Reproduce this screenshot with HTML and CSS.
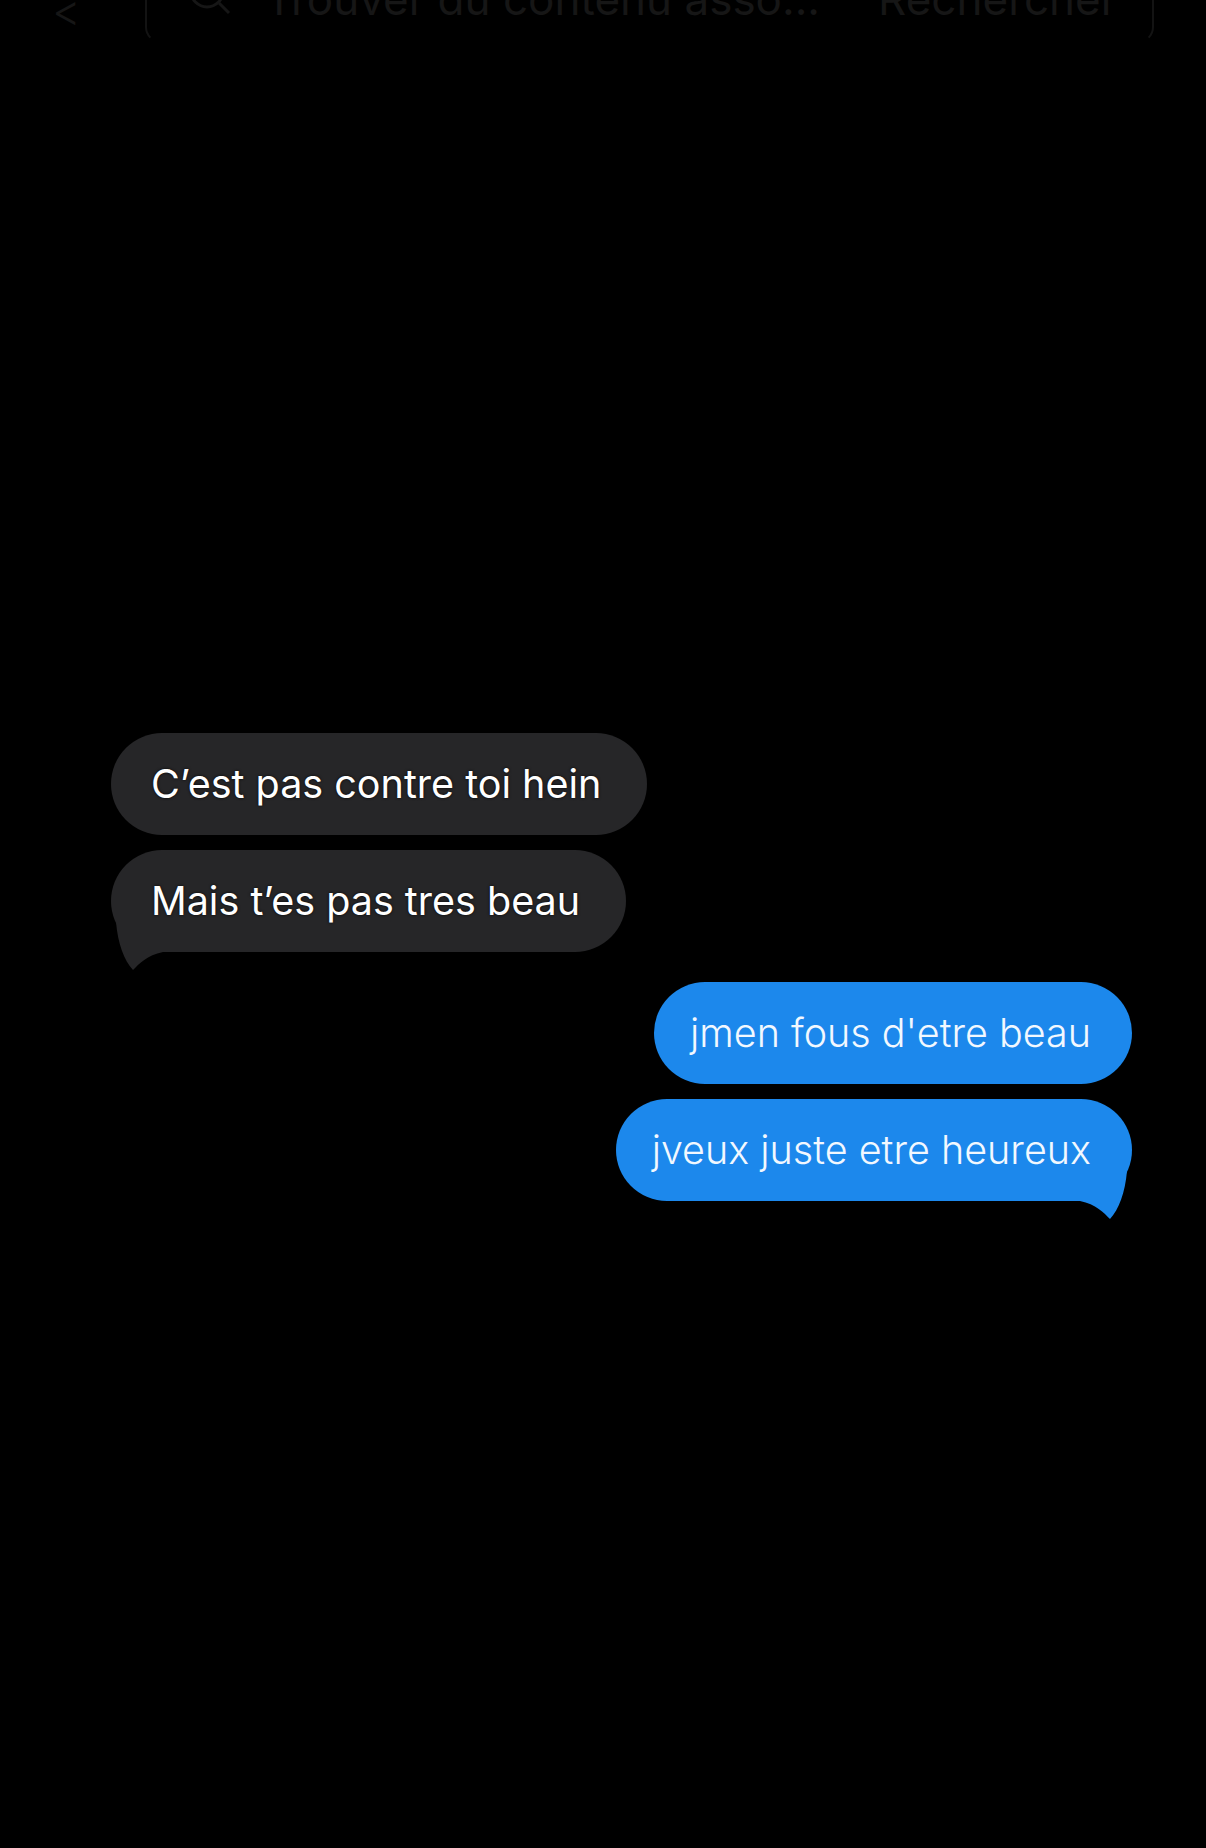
FILE: index.html
```html
<!DOCTYPE html>
<html lang="fr">
<head>
  <meta charset="UTF-8" />
  <meta name="viewport" content="width=device-width, initial-scale=1.0" />
  <title>Messages</title>
  <link rel="stylesheet" href="styles.css">
</head>
<body>
  <div class="topbar">
    <span class="back">&lt;</span>
    <div class="field">
      <svg class="search-icon" width="50" height="50" viewBox="0 0 50 50">
        <circle cx="22" cy="12" r="16" fill="none" stroke="#161616" stroke-width="3" />
        <line x1="34" y1="24" x2="44" y2="34" stroke="#161616" stroke-width="3" />
      </svg>
      <span class="hint">Trouver du contenu asso...</span>
      <span class="action">Rechercher</span>
    </div>
  </div>

  <div class="thread">
    <div class="msg in">C’est pas contre toi hein</div>
    <div class="msg in last">
      Mais t’es pas tres beau
      <svg class="tail" width="60" height="50" viewBox="0 0 60 50">
        <path d="M5 0 C7 22, 13 38, 22 48 C28 42, 36 33, 52 30 L52 0 Z" fill="#262628" />
      </svg>
    </div>
    <div class="msg out first">jmen fous d'etre beau</div>
    <div class="msg out last">
      jveux juste etre heureux
      <svg class="tail" width="60" height="50" viewBox="0 0 60 50">
        <path d="M5 0 C7 22, 13 38, 22 48 C28 42, 36 33, 52 30 L52 0 Z" fill="#1c88ec" />
      </svg>
    </div>
  </div>
</body>
</html>
```

FILE: styles.css
```css
body {
  margin: 0;
  background: #000;
  font-family: Inter, "Noto Sans", Arial, sans-serif;
  min-height: 100vh;
}
.topbar {
  height: 50px;
  overflow: hidden;
  display: flex;
  align-items: flex-start;
  color: #161616;
  font-size: 44px;
  line-height: 1;
}
.back {
  margin: -12px 0 0 52px;
  width: 93px;
  font-weight: 300;
}
.field {
  margin-top: -30px;
  height: 73px;
  width: 1009px;
  box-sizing: border-box;
  border: 2px solid #131313;
  border-top: none;
  border-bottom-color: transparent;
  border-radius: 0 0 16px 16px;
  display: flex;
  align-items: flex-start;
  padding-top: 7px;
}
.search-icon {
  margin: 2px 30px 0 38px;
  flex-shrink: 0;
}
.hint {
  width: 613px;
  white-space: nowrap;
  overflow: hidden;
}
.thread {
  display: flex;
  flex-direction: column;
  gap: 15px;
  padding: 683px 74px 0 111px;
}
.msg {
  position: relative;
  height: 102px;
  border-radius: 51px;
  display: flex;
  align-items: center;
  font-size: 39.5px;
  color: #fff;
  white-space: nowrap;
}
.msg.in {
  align-self: flex-start;
  background: #262628;
  padding: 0 46px 0 40px;
  text-shadow: 0 0 3px rgba(0, 0, 0, 0.9);
}
.msg.out {
  align-self: flex-end;
  background: #1c88ec;
  padding: 0 41px 0 36px;
  font-weight: 300;
  color: #f2f8ff;
}
.msg.out.first {
  margin-top: 15px;
}
.tail {
  position: absolute;
  top: 72px;
  left: 0;
}
.msg.out .tail {
  left: auto;
  right: 0;
  transform: scaleX(-1);
}
```
